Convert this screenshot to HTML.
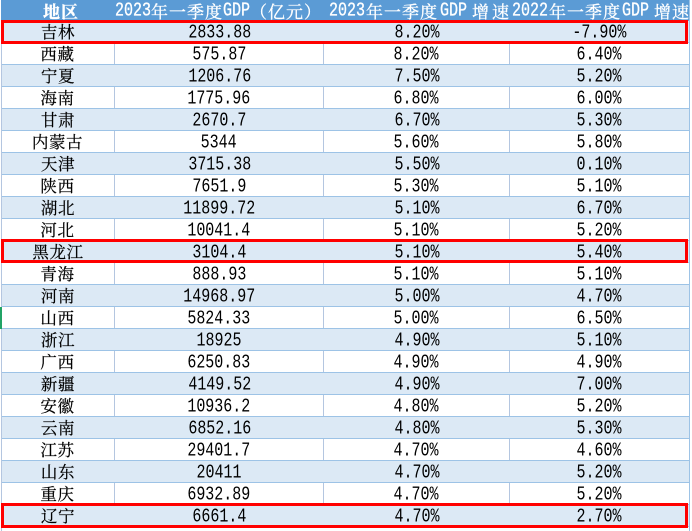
<!DOCTYPE html>
<html lang="zh">
<head>
<meta charset="utf-8">
<style>
html,body{margin:0;padding:0;background:#fff}
body{width:692px;height:531px;overflow:hidden;position:relative;font-family:"Liberation Mono","Noto Serif CJK SC",monospace;font-size:18px;color:#000}
#hd{position:absolute;left:1px;top:0;width:688px;height:21px;background:#5b9bd5;color:#fff;-webkit-text-stroke:.3px #fff}
#hd span{position:absolute;top:0;line-height:21px;white-space:nowrap}
#hd i{font-style:normal;display:inline-block;transform:scale(.833,1.08);transform-origin:0 50%;margin-top:1px}
.cj{font-family:"Noto Serif CJK SC",serif;font-size:17px;letter-spacing:1px}
#tb{position:absolute;left:1px;top:21px;width:689px}
.r{display:flex;height:21px;border-bottom:1px solid #9dc3e6;line-height:21px;text-align:center;white-space:nowrap}
.r:nth-child(odd){background:#dce9f5}
.r div{box-sizing:border-box;height:21px;overflow:hidden}
.r div:nth-child(1){width:114px;font-family:"Noto Serif CJK SC",serif;font-size:16.5px;letter-spacing:.6px;line-height:21px;-webkit-text-stroke:.2px #000}
.r div:nth-child(2){width:209px}
.r div:nth-child(3){width:186px}
.r div:nth-child(4){width:179px}
.r:nth-child(even) div:not(:last-child){border-right:1px solid #b4c6e0}
.r div b{font-weight:normal;display:inline-block;transform:translateY(2px) scale(.833,1.1)}
#ll{position:absolute;left:1px;top:21px;width:1px;height:510px;background:#b4c6e0}
#rl{position:absolute;left:689px;top:0;width:1px;height:531px;background:#9dc3e6}
#gm{position:absolute;left:0;top:307px;width:2px;height:22px;background:#21a366}
.box{position:absolute;left:1px;width:687px;box-sizing:border-box;border:3px solid #ff0000}
</style>
</head>
<body>
<div id="hd">
<span style="left:42px;font-weight:bold" class="cj">地区</span>
<span style="left:114px"><i>2023</i></span><span style="left:150px" class="cj">年一季度</span><span style="left:222px"><i>GDP</i></span><span style="left:249px" class="cj">（亿元）</span>
<span style="left:328px"><i>2023</i></span><span style="left:365px" class="cj">年一季度</span><span style="left:439px"><i>GDP</i></span><span style="left:471px" class="cj">增</span><span style="left:491px" class="cj">速</span>
<span style="left:511px"><i>2022</i></span><span style="left:548px" class="cj">年一季度</span><span style="left:621px"><i>GDP</i></span><span style="left:653px" class="cj">增</span><span style="left:671px" class="cj">速</span>
</div>
<div id="tb">
<div class="r"><div>吉林</div><div><b>2833.88</b></div><div><b>8.20%</b></div><div><b>-7.90%</b></div></div>
<div class="r"><div>西藏</div><div><b>575.87</b></div><div><b>8.20%</b></div><div><b>6.40%</b></div></div>
<div class="r"><div>宁夏</div><div><b>1206.76</b></div><div><b>7.50%</b></div><div><b>5.20%</b></div></div>
<div class="r"><div>海南</div><div><b>1775.96</b></div><div><b>6.80%</b></div><div><b>6.00%</b></div></div>
<div class="r"><div>甘肃</div><div><b>2670.7</b></div><div><b>6.70%</b></div><div><b>5.30%</b></div></div>
<div class="r"><div>内蒙古</div><div><b>5344</b></div><div><b>5.60%</b></div><div><b>5.80%</b></div></div>
<div class="r"><div>天津</div><div><b>3715.38</b></div><div><b>5.50%</b></div><div><b>0.10%</b></div></div>
<div class="r"><div>陕西</div><div><b>7651.9</b></div><div><b>5.30%</b></div><div><b>5.10%</b></div></div>
<div class="r"><div>湖北</div><div><b>11899.72</b></div><div><b>5.10%</b></div><div><b>6.70%</b></div></div>
<div class="r"><div>河北</div><div><b>10041.4</b></div><div><b>5.10%</b></div><div><b>5.20%</b></div></div>
<div class="r"><div>黑龙江</div><div><b>3104.4</b></div><div><b>5.10%</b></div><div><b>5.40%</b></div></div>
<div class="r"><div>青海</div><div><b>888.93</b></div><div><b>5.10%</b></div><div><b>5.10%</b></div></div>
<div class="r"><div>河南</div><div><b>14968.97</b></div><div><b>5.00%</b></div><div><b>4.70%</b></div></div>
<div class="r"><div>山西</div><div><b>5824.33</b></div><div><b>5.00%</b></div><div><b>6.50%</b></div></div>
<div class="r"><div>浙江</div><div><b>18925</b></div><div><b>4.90%</b></div><div><b>5.10%</b></div></div>
<div class="r"><div>广西</div><div><b>6250.83</b></div><div><b>4.90%</b></div><div><b>4.90%</b></div></div>
<div class="r"><div>新疆</div><div><b>4149.52</b></div><div><b>4.90%</b></div><div><b>7.00%</b></div></div>
<div class="r"><div>安徽</div><div><b>10936.2</b></div><div><b>4.80%</b></div><div><b>5.20%</b></div></div>
<div class="r"><div>云南</div><div><b>6852.16</b></div><div><b>4.80%</b></div><div><b>5.30%</b></div></div>
<div class="r"><div>江苏</div><div><b>29401.7</b></div><div><b>4.70%</b></div><div><b>4.60%</b></div></div>
<div class="r"><div>山东</div><div><b>20411</b></div><div><b>4.70%</b></div><div><b>5.20%</b></div></div>
<div class="r"><div>重庆</div><div><b>6932.89</b></div><div><b>4.70%</b></div><div><b>5.20%</b></div></div>
<div class="r"><div>辽宁</div><div><b>6661.4</b></div><div><b>4.70%</b></div><div><b>2.70%</b></div></div>
</div>
<div id="ll"></div>
<div id="rl"></div>
<div id="gm"></div>
<div class="box" style="top:20px;height:24px"></div>
<div class="box" style="top:239px;height:24px"></div>
<div class="box" style="top:503px;height:25px"></div>
</body>
</html>
